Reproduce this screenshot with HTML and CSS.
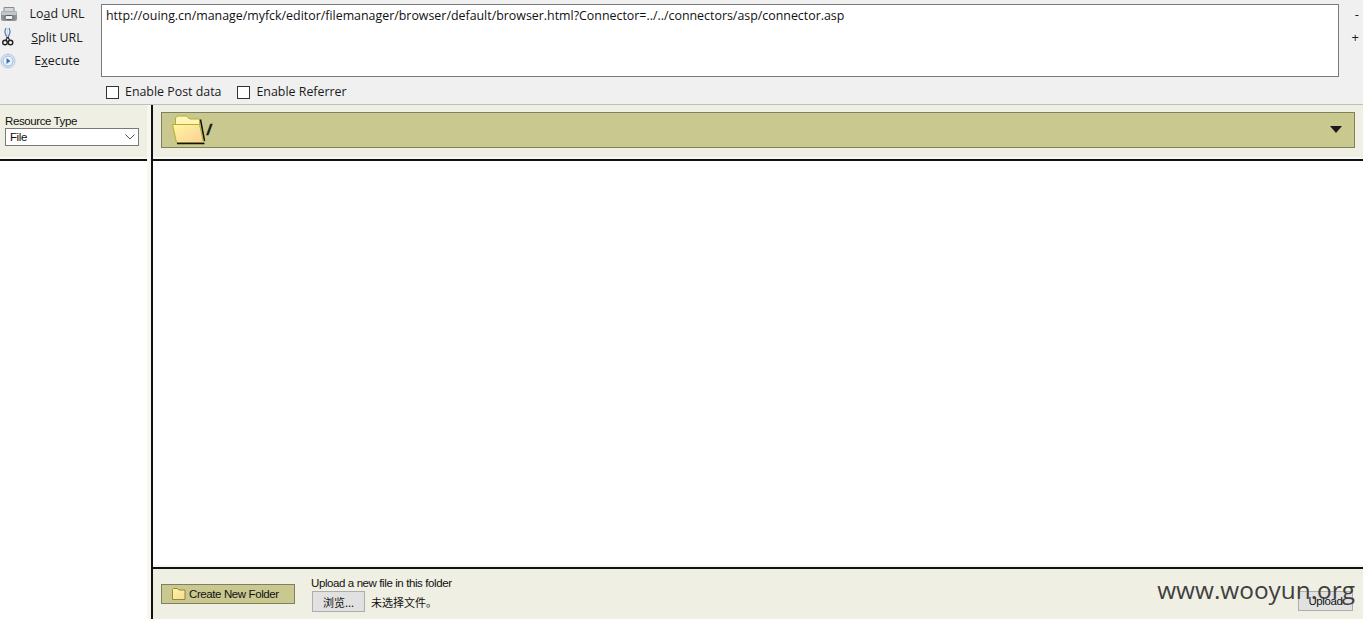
FILE: index.html
```html
<!DOCTYPE html>
<html lang="en">
<head>
<meta charset="utf-8">
<title>File Browser</title>
<link rel="stylesheet" href="styles.css">
</head>
<body>
<div class="page">
  <section class="hackbar">
    <div class="actions">
      <div class="action">
        <svg class="icon" width="18" height="16" viewBox="0 0 18 16"><path d="M4 1.500h10v4H4z" fill="#d5d7d9" stroke="#8a8d90"/><rect x="1" y="5" width="16" height="10" rx="2" fill="#8f9396"/><rect x="1.500" y="5.500" width="15" height="3.500" fill="#c4c7ca"/><rect x="5" y="9.500" width="8" height="4" rx="1.500" fill="#eef0f1" stroke="#55595c"/></svg>
        <span class="action-label"><span>Lo<u>a</u>d URL</span></span>
      </div>
      <div class="action">
        <svg class="icon" width="18" height="20" viewBox="0 0 18 20"><path d="M6 1c-2 4-1 7 2 10M9 1c2 4 1 7-2 10" fill="none" stroke="#5d83b8" stroke-width="1.300"/><path d="M7.500 1v9" stroke="#cfdcee" stroke-width="1"/><circle cx="5" cy="15.500" r="2.300" fill="none" stroke="#222" stroke-width="1.400"/><circle cx="10.500" cy="15.500" r="2.300" fill="none" stroke="#222" stroke-width="1.400"/><path d="M6 13l1.500-3M9.500 13L8 10" stroke="#222" stroke-width="1.200"/></svg>
        <span class="action-label"><span><u>S</u>plit URL</span></span>
      </div>
      <div class="action">
        <svg class="icon" width="18" height="16" viewBox="0 0 18 16"><circle cx="8" cy="8" r="7" fill="#dfe9f7" stroke="#b5c6e0"/><circle cx="8" cy="8" r="5" fill="#eef4fc" stroke="#9db7dc"/><path d="M6.500 5v6l4-3z" fill="#3f6fb5"/></svg>
        <span class="action-label"><span>E<u>x</u>ecute</span></span>
      </div>
    </div>
    <div class="url-column">
      <div class="url-box">http://ouing.cn/manage/myfck/editor/filemanager/browser/default/browser.html?Connector=../../connectors/asp/connector.asp</div>
      <div class="options">
        <label class="option"><span class="check"></span>Enable Post data</label>
        <label class="option"><span class="check"></span>Enable Referrer</label>
      </div>
    </div>
    <div class="sizers"><span>-</span><span>+</span></div>
  </section>

  <div class="browser">
    <aside class="side">
      <div class="side-head">
        <div class="type-label">Resource Type</div>
        <div class="type-select"><span>File</span><svg width="10" height="6" viewBox="0 0 10 6"><path d="M0.500 0.500L5 5l4.500-4.500" fill="none" stroke="#555" stroke-width="1"/></svg></div>
      </div>
      <div class="side-rule"></div>
      <div class="side-body"></div>
    </aside>
    <main class="main">
      <div class="main-head">
        <div class="path-bar">
          <svg class="folder-big" width="34" height="30" viewBox="0 0 34 30">
            <defs><linearGradient id="fold" x1="0" y1="0" x2="1" y2="1"><stop offset="0" stop-color="#fff6a0"/><stop offset="1" stop-color="#fbcf96"/></linearGradient></defs>
            <path d="M3.500 9.500V3l2-2h9l3 3h10v5.500z" fill="#fdf6b4" stroke="#b3ab3a"/>
            <path d="M28.500 4.500l4 21.500" fill="none" stroke="#111" stroke-width="1.500"/>
            <path d="M0.500 9.500h27l4 18h-27z" fill="url(#fold)" stroke="#b8ac2c"/>
            <path d="M5 28.500h27.500" stroke="#111" stroke-width="1.500"/>
          </svg>
          <span class="path-text">/</span>
          <span class="path-arrow"></span>
        </div>
      </div>
      <div class="main-rule"></div>
      <div class="main-body"></div>
      <div class="foot-rule"></div>
      <div class="foot">
        <div class="create-btn">
          <svg width="16" height="14" viewBox="0 0 16 14"><defs><linearGradient id="fold2" x1="0" y1="0" x2="1" y2="1"><stop offset="0" stop-color="#fff6a0"/><stop offset="1" stop-color="#fbd79a"/></linearGradient></defs><path d="M1.500 12.500V2.500l1-1h4l1.500 1.500h6v9.500z" fill="url(#fold2)" stroke="#8d8a3a"/></svg>
          <span>Create New Folder</span>
        </div>
        <div class="upload">
          <div class="upload-title">Upload a new file in this folder</div>
          <div class="upload-row"><span class="file-btn">浏览...</span><span class="file-name">未选择文件。</span></div>
        </div>
        <div class="upload-btn">Upload</div>
      </div>
    </main>
  </div>
  <div class="watermark">www.wooyun.org</div>
</div>
</body>
</html>
```

FILE: styles.css
```css
html, body {
  margin: 0;
  padding: 0;
  height: 100%;
  overflow: hidden;
}
.page {
  position: relative;
  width: 1363px;
  height: 619px;
  display: flex;
  flex-direction: column;
  font-family: "Liberation Sans", Arial, sans-serif;
  background: #fff;
}
.hackbar {
  height: 104px;
  background: #f0f0f0;
  border-bottom: 1px solid #bfbfbd;
  display: flex;
  font-family: "Open Sans", sans-serif;
  font-size: 12.4px;
  color: #1a1a1a;
}
.actions {
  width: 101px;
  padding-top: 2px;
  display: flex;
  flex-direction: column;
}
.action {
  height: 23.500px;
  display: flex;
  align-items: center;
}
.icon {
  flex: none;
}
.action-label {
  width: 78px;
  text-align: center;
}
.url-column {
  flex: 1;
  padding-top: 4px;
}
.url-box {
  border: 1px solid #7a7a7a;
  background: #fff;
  padding: 2px 4px;
  line-height: 17px;
  box-sizing: border-box;
  height: 73px;
  color: #111;
}
.options {
  display: flex;
  gap: 16px;
  margin: 7px 0 0 5px;
}
.option {
  display: flex;
  align-items: center;
  gap: 6px;
  line-height: 16px;
}
.check {
  width: 11px;
  height: 11px;
  border: 1px solid #333;
  background: #fff;
}
.sizers {
  width: 24px;
  display: flex;
  flex-direction: column;
  align-items: flex-end;
  padding: 5px 4px 0 0;
  box-sizing: border-box;
  gap: 5px;
  line-height: 18px;
  font-size: 13px;
}
.browser {
  flex: 1;
  display: flex;
  min-height: 0;
}
.side {
  width: 147px;
  display: flex;
  flex-direction: column;
  border-right: 4px solid #f7f7f0;
  flex: none;
}
.side-head {
  height: 52px;
  box-sizing: border-box;
  background: #efefe3;
  padding: 9px 5px 0;
  font-size: 11.500px;
  letter-spacing: -0.4px;
  color: #111;
}
.type-label {
  line-height: 14px;
}
.type-select {
  width: 134px;
  height: 18px;
  box-sizing: border-box;
  border: 1px solid #7a7a7a;
  background: #fff;
  padding: 0 3px 0 4px;
  display: flex;
  align-items: center;
  justify-content: space-between;
}
.side-rule, .main-rule {
  border-top: 2px solid #f8f8f4;
  border-bottom: 2px solid #111;
}
.side-body {
  flex: 1;
}
.main {
  flex: 1;
  border-left: 2px solid #111;
  display: flex;
  flex-direction: column;
  min-width: 0;
}
.main-head {
  height: 52px;
  box-sizing: border-box;
  background: #efefe3;
  padding: 7px 8px 0;
}
.path-bar {
  position: relative;
  height: 36px;
  box-sizing: border-box;
  border: 1px solid #808060;
  background: #c8c88f;
  display: flex;
  align-items: center;
  padding-left: 10px;
}
.folder-big {
  flex: none;
}
.path-text {
  font: italic bold 14px "Liberation Sans", sans-serif;
  -webkit-text-stroke: 0.6px #111;
  color: #111;
  margin-left: 1px;
}
.path-arrow {
  position: absolute;
  right: 12px;
  top: 13px;
  border-left: 6px solid transparent;
  border-right: 6px solid transparent;
  border-top: 7px solid #1a1a1a;
}
.main-body {
  flex: 1;
}
.foot-rule {
  border-top: 2px solid #f5f5f5;
  border-bottom: 2px solid #111;
}
.foot {
  height: 50px;
  background: #efefe3;
  display: flex;
  padding: 0 10px 0 8px;
  font-size: 11.500px;
  letter-spacing: -0.4px;
  color: #111;
  position: relative;
}
.create-btn {
  width: 134px;
  height: 20px;
  box-sizing: border-box;
  margin-top: 15px;
  border: 1px solid #808060;
  background: #c8c88f;
  display: flex;
  align-items: center;
  padding-left: 9px;
  gap: 2px;
}
.upload {
  margin-left: 16px;
  padding-top: 7px;
  flex: 1;
}
.upload-title {
  line-height: 14px;
}
.upload-row {
  display: flex;
  align-items: center;
  margin-top: 1px;
  font-family: "Noto Sans CJK SC", sans-serif;
  font-size: 11px;
  letter-spacing: 0;
}
.file-btn {
  width: 53px;
  height: 21px;
  margin-left: 1px;
  box-sizing: border-box;
  border: 1px solid #adadad;
  background: #e1e1e1;
  display: flex;
  align-items: center;
  justify-content: center;
}
.file-name {
  margin-left: 6px;
}
.upload-btn {
  width: 55px;
  height: 20px;
  box-sizing: border-box;
  margin-top: 22px;
  border: 1px solid #adadad;
  background: #e1e1e1;
  display: flex;
  align-items: center;
  justify-content: center;
}
.watermark {
  position: absolute;
  right: 8px;
  top: 573px;
  font: 24.400px/34px "Open Sans", sans-serif;
  color: #3f3f3f;
}
```
